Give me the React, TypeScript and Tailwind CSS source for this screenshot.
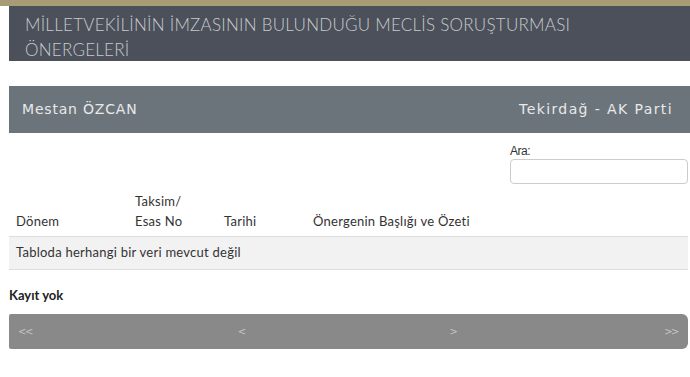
const columns = ['Dönem', 'Taksim/ Esas No', 'Tarihi', 'Önergenin Başlığı ve Özeti'];

const App: React.FC = () => {
  return (
    <div className="w-[690px] h-[377px] bg-white font-['Lato',sans-serif] overflow-hidden">
      <div className="h-[6px] bg-[#a89c76]" />
      <div className="ml-[9px] h-[55px] bg-[#4b505b] px-[16px] pt-[6px]">
        <h1 className="text-[17px] leading-[25px] font-light text-[#c9cacc] tracking-[0.25px]">
          MİLLETVEKİLİNİN İMZASININ BULUNDUĞU MECLİS SORUŞTURMASI
          <br />
          ÖNERGELERİ
        </h1>
      </div>

      <div className="ml-[9px] mt-[25px] h-[47px] bg-[#6c747b] flex items-center justify-between px-[13px] font-['DejaVu_Sans',sans-serif] text-[14px] tracking-[0.8px] text-[#e8e9ea]">
        <span>Mestan ÖZCAN</span>
        <span className="mr-[4px] tracking-[1.4px]">Tekirdağ - AK Parti</span>
      </div>

      <div className="flex justify-end pr-[2px] mt-[11px]">
        <label className="w-[178px] flex flex-col text-[12px] leading-[14px] text-[#333] font-['Liberation_Sans',sans-serif] tracking-[-0.5px]">
          Ara:
          <input className="mt-[1px] h-[25px] border border-[#ccc] rounded-[4px] outline-none" />
        </label>
      </div>

      <table className="ml-[9px] mt-[7px] w-[679px] text-[13px] tracking-[0.25px] text-[#333] border-collapse">
        <thead>
          <tr className="border-b border-[#ddd] align-bottom text-left leading-[20px]">
            <th className="font-normal w-[126px] pl-[7px] pb-[5px]">{columns[0]}</th>
            <th className="font-normal w-[89px] pb-[5px]">
              Taksim/
              <br />
              Esas No
            </th>
            <th className="font-normal w-[89px] pb-[5px]">{columns[2]}</th>
            <th className="font-normal pb-[5px]">{columns[3]}</th>
          </tr>
        </thead>
        <tbody>
          <tr className="bg-[#f2f2f2] border-b border-[#ddd]">
            <td colSpan={4} className="h-[33px] pl-[7px]">
              Tabloda herhangi bir veri mevcut değil
            </td>
          </tr>
        </tbody>
      </table>

      <div className="ml-[9px] mt-[16px] text-[13px] font-bold text-[#222]">Kayıt yok</div>

      <div className="ml-[9px] mr-[2px] mt-[8px] h-[35px] bg-[#898989] rounded-r-[6px] rounded-l-[2px] grid grid-cols-4 items-center font-['DejaVu_Sans',sans-serif] text-[10px] text-[#c4c4c4]">
        <span className="pl-[9px] tracking-[-1.5px]">&lt;&lt;</span>
        <span className="pl-[59px]">&lt;</span>
        <span className="pl-[101px]">&gt;</span>
        <span className="text-right pr-[10px] tracking-[-1.5px]">&gt;&gt;</span>
      </div>
    </div>
  );
};

export default App;
